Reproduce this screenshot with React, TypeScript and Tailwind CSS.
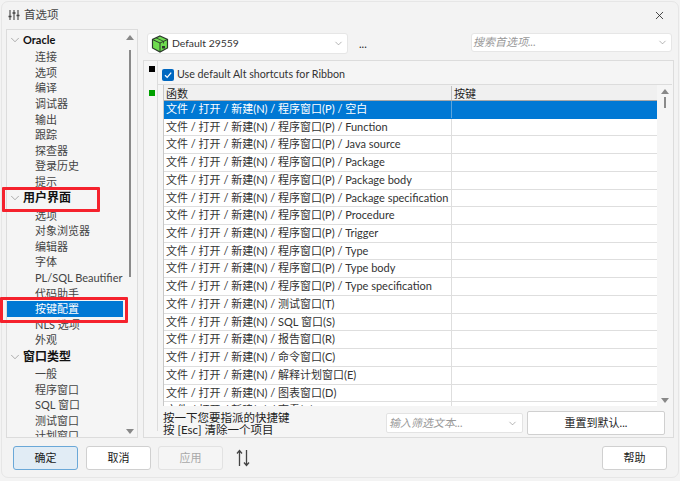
import { ChevronDown, X } from "lucide-react";

const tree = [
  { title: "Oracle", items: ["连接", "选项", "编译", "调试器", "输出", "跟踪", "探查器", "登录历史", "提示"] },
  { title: "用户界面", items: ["选项", "对象浏览器", "编辑器", "字体", "PL/SQL Beautifier", "代码助手", "按键配置", "NLS 选项", "外观"] },
  { title: "窗口类型", items: ["一般", "程序窗口", "SQL 窗口", "测试窗口", "计划窗口"] },
];

const win = "文件 / 打开 / 新建(N) / 程序窗口(P) / ";
const rows = [
  win + "空白",
  win + "Function",
  win + "Java source",
  win + "Package",
  win + "Package body",
  win + "Package specification",
  win + "Procedure",
  win + "Trigger",
  win + "Type",
  win + "Type body",
  win + "Type specification",
  "文件 / 打开 / 新建(N) / 测试窗口(T)",
  "文件 / 打开 / 新建(N) / SQL 窗口(S)",
  "文件 / 打开 / 新建(N) / 报告窗口(R)",
  "文件 / 打开 / 新建(N) / 命令窗口(C)",
  "文件 / 打开 / 新建(N) / 解释计划窗口(E)",
  "文件 / 打开 / 新建(N) / 图表窗口(D)",
  "文件 / 打开 / 新建(N) / 查看(V)",
];

function BoxIcon() {
  return (
    <svg width="18" height="18" viewBox="0 0 18 18">
      <path d="M9 1 L16.5 4.5 V13 L9 17 L1.5 13 V4.5 Z" fill="#6fdc4f" stroke="#2c3a2c" strokeWidth="1.2" />
      <path d="M1.5 4.5 L9 8 L16.5 4.5 M9 8 V17" fill="none" stroke="#2c3a2c" strokeWidth="1" />
      <path d="M5 2.8 L12.5 6.3 V8.5" fill="none" stroke="#2c3a2c" strokeWidth="0.8" />
      <rect x="11" y="11" width="3" height="2.5" fill="#2c3a2c" />
    </svg>
  );
}

function ArrowsIcon() {
  return (
    <svg width="14" height="18" viewBox="0 0 14 18" fill="none" stroke="#444" strokeWidth="1.3">
      <path d="M3.5 17 V1.5 M1 4.5 L3.5 1.5 L6 4.5" />
      <path d="M10.5 1 V16.5 M8 13.5 L10.5 16.5 L13 13.5" />
    </svg>
  );
}

function SlidersIcon() {
  return (
    <svg width="12" height="12" viewBox="0 0 12 12" fill="none" stroke="#444" strokeWidth="1.1">
      <path d="M2 1 V11 M6 1 V11 M10 1 V11" />
      <path d="M0.5 7.5 H3.5 M4.5 4 H7.5 M8.5 6.5 H11.5" strokeWidth="1.4" />
    </svg>
  );
}

function Btn({ label, className }: { label: string; className?: string }) {
  return (
    <button className={"h-[24px] rounded-[3px] border " + (className ?? "w-[65px] border-[#d0d0d0] bg-white text-[#1a1a1a]")}>
      {label}
    </button>
  );
}

export default function App() {
  return (
    <div className="relative h-[481px] w-[680px] overflow-hidden bg-[#f3f3f3] font-['Lato','Noto_Sans_CJK_SC',sans-serif] text-[11px] text-[#1f1f1f]">
      {/* window edge */}
      <div className="pointer-events-none absolute inset-x-[1px] bottom-[3px] top-[1px] rounded-[7px] border border-[#e6e6e6]" />

      {/* title bar */}
      <div className="relative flex h-[29px] items-center px-[8px] pt-[1px]">
        <SlidersIcon />
        <span className="ml-[4px] text-[11.5px] text-[#444]">首选项</span>
        <X className="ml-auto mr-[6px] h-[13px] w-[13px] text-[#222]" strokeWidth={1.5} />
      </div>

      <div className="relative flex h-[409px] gap-[5px] pl-[6px] pr-[6px]">
        {/* tree */}
        <div className="relative h-full w-[132px] shrink-0 overflow-hidden border border-[#dcdcdc] bg-[#f5f5f5] pt-[1px]">
          {tree.map((group) => (
            <div key={group.title}>
              <div className="flex h-[18px] items-center">
                <ChevronDown className="ml-[1px] h-[14px] w-[14px] text-[#777]" strokeWidth={1} />
                <span className={"ml-[1px] font-bold text-[#111] " + (group.title === "Oracle" ? "text-[11px]" : "text-[12px]")}>{group.title}</span>
              </div>
              {group.items.map((item) => {
                const active = item === "按键配置";
                return (
                  <div key={item} className={"flex h-[15.6px] items-center pl-[28px] leading-none " + (active ? "mr-[14px] bg-[#0078d4] text-white" : "text-[#444]")}>
                    {item}
                  </div>
                );
              })}
            </div>
          ))}
          {/* scrollbar */}
          <div className="absolute right-0 top-0 flex h-full w-[14px] flex-col items-center bg-[#f5f5f5] pt-[5px]">
            <div className="h-0 w-0 border-x-[4px] border-b-[5px] border-x-transparent border-b-[#888]" />
            <div className="mt-[10px] h-[227px] w-[2px] bg-[#8a8a8a]" />
            <div className="mb-[3px] mt-auto h-0 w-0 border-x-[4px] border-t-[5px] border-x-transparent border-t-[#888]" />
          </div>
        </div>

        {/* right side */}
        <div className="flex min-w-0 flex-1 flex-col">
          <div className="flex h-[31px] shrink-0 items-start pl-[4px] pr-[2px] pt-[4px]">
            <div className="flex h-[21px] w-[201px] items-center rounded-[3px] border border-[#e6e6e6] bg-white pl-[3px] pr-[3px]">
              <BoxIcon />
              <span className="ml-[3px] text-[10.4px] text-[#333]">Default 29559</span>
              <ChevronDown className="ml-auto h-[11px] w-[11px] text-[#777]" strokeWidth={1.2} />
            </div>
            <span className="ml-[11px] mt-[3px]">...</span>
            <div className="ml-auto flex h-[19px] w-[201px] items-center rounded-[3px] border border-[#e6e6e6] bg-white pl-[1px] pr-[3px]">
              <span className="text-[11px] italic text-[#999]">搜索首选项...</span>
              <ChevronDown className="ml-auto h-[11px] w-[11px] text-[#777]" strokeWidth={1.2} />
            </div>
          </div>

          <div className="flex h-[378px] shrink-0 border border-[#dcdcdc] bg-[#f5f5f5] pl-[5px] pr-[1px]">
            <div className="flex w-[8px] shrink-0 flex-col items-start pt-[5px]">
              <div className="h-[6px] w-[6px] bg-black" />
              <div className="mt-[18px] h-[6px] w-[6px] bg-[#00a000]" />
            </div>
            <div className="mb-[6px] flex min-w-0 flex-1 flex-col border-l border-[#dcdcdc] pt-[1px]">
              <div className="flex h-[23px] shrink-0 items-center border-b border-[#dcdcdc] pl-[4px] pt-[3px]">
                <span className="flex h-[12px] w-[12px] items-center justify-center rounded-[2px] bg-[#0067c0]">
                  <svg width="10" height="10" viewBox="0 0 10 10" fill="none" stroke="white" strokeWidth="1.3">
                    <path d="M2 5.2 L4.2 7.4 L8.2 2.6" />
                  </svg>
                </span>
                <span className="ml-[3px] text-[10.7px] text-[#333]">Use default Alt shortcuts for Ribbon</span>
              </div>

              <div className="flex h-[321px] shrink-0 pl-[5px]">
                <div className="h-full min-w-0 flex-1 overflow-hidden border-l border-[#c8c8c8] bg-white">
                  <div className="flex h-[16px] border-b border-[#a8a8a8] bg-[#f0f0f0] pt-[1px] leading-[15px]">
                    <div className="w-[288px] shrink-0 border-r border-[#c0c0c0] pl-[2px]">函数</div>
                    <div className="pl-[2px]">按键</div>
                  </div>
                  {rows.map((row, i) => (
                    <div key={row} className={"flex h-[17.72px] border-b leading-[15px] " + (i === 0 ? "border-[#0078d4] bg-[#0078d4] text-white" : "border-[#dedede] text-[#333]")}>
                      <div className={"w-[288px] shrink-0 whitespace-nowrap border-r pl-[2px] " + (i === 0 ? "border-[#5aa5de]" : "border-[#dedede]")}>{row}</div>
                    </div>
                  ))}
                </div>
                <div className="flex h-full w-[15px] shrink-0 flex-col items-center pt-[4px]">
                  <div className="h-0 w-0 border-x-[4px] border-b-[5px] border-x-transparent border-b-[#888]" />
                  <div className="mt-[3px] h-[11px] w-[2px] bg-[#8a8a8a]" />
                  <div className="mb-[3px] mt-auto h-0 w-0 border-x-[4px] border-t-[5px] border-x-transparent border-t-[#888]" />
                </div>
              </div>

              <div className="flex items-start pl-[5px] pr-[7px]">
                <div className="mt-[6px] text-[11.5px] leading-[12px] text-[#222]">
                  <div>按一下您要指派的快捷键</div>
                  <div>按 [Esc] 清除一个项目</div>
                </div>
                <div className="ml-auto mt-[7px] flex h-[20px] w-[137px] items-center rounded-[2px] border border-[#e3e3e3] bg-white pl-[2px] pr-[4px]">
                  <span className="text-[11px] italic text-[#999]">输入筛选文本...</span>
                  <ChevronDown className="ml-auto h-[11px] w-[11px] text-[#777]" strokeWidth={1.2} />
                </div>
                <button className="ml-[4px] mt-[5px] h-[24px] w-[138px] shrink-0 rounded-[2px] border border-[#d0d0d0] bg-white text-[#222]">
                  重置到默认...
                </button>
              </div>
            </div>
          </div>
        </div>
      </div>

      {/* footer buttons */}
      <div className="relative flex items-center px-[13px] pt-[8px]">
        <Btn label="确定" className="w-[65px] border-[#6aa8d8] bg-[#e1ecf5] text-[#1a1a1a]" />
        <div className="w-[8px]" />
        <Btn label="取消" />
        <div className="w-[7px]" />
        <Btn label="应用" className="w-[65px] border-[#e2e2e2] bg-[#f5f5f5] text-[#a8a8a8]" />
        <div className="ml-[13px]">
          <ArrowsIcon />
        </div>
        <Btn label="帮助" className="ml-auto w-[65px] border-[#d0d0d0] bg-white text-[#1a1a1a]" />
      </div>

      {/* red annotation boxes */}
      <div className="absolute left-[2px] top-[187px] h-[25px] w-[98px] rounded-[1px] border-[3px] border-[#f5222d]" />
      <div className="absolute left-0 top-[297px] h-[26px] w-[128px] rounded-[1px] border-[3px] border-[#f5222d]" />
    </div>
  );
}
